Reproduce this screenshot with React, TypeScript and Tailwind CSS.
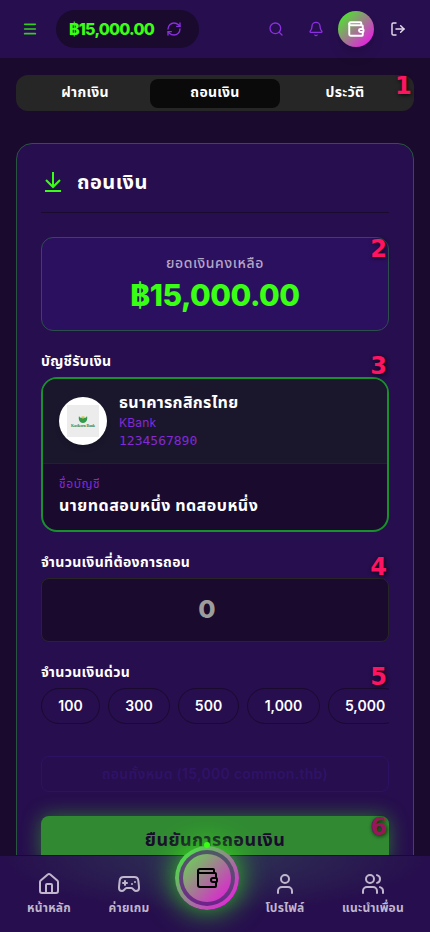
import { LogOut, Search, Bell, Menu, RefreshCw, House, Gamepad2, User, Users } from "lucide-react";

const quickAmounts = [
  { label: "100", width: "w-[59px]" },
  { label: "300", width: "w-[62px]" },
  { label: "500", width: "w-[61px]" },
  { label: "1,000", width: "w-[73px]" },
  { label: "5,000", width: "w-[74px]" },
];

function WalletIcon({ className }: { className: string }) {
  return (
    <svg className={className} viewBox="0 0 24 24" fill="none" stroke="currentColor" strokeLinecap="round" strokeLinejoin="round">
      <path d="M19 7V4a1 1 0 0 0-1-1H5a2 2 0 0 0 0 4h15a1 1 0 0 1 1 1v4h-3a2 2 0 0 0 0 4h3a1 1 0 0 0 1-1v-2a1 1 0 0 0-1-1" />
      <path d="M3 5v14a2 2 0 0 0 2 2h15a1 1 0 0 0 1-1v-4" />
    </svg>
  );
}

function Marker({ n, className }: { n: number; className: string }) {
  return (
    <span
      className={`absolute z-10 font-['DejaVu_Sans'] text-[24px] leading-none font-bold [text-shadow:1px_1px_4px_rgba(0,0,0,0.8)] ${className}`}
    >
      {n}
    </span>
  );
}

function Header() {
  return (
    <header className="flex h-[58px] items-center bg-[#270e4e] pl-[22px] pr-[22px]">
      <Menu className="size-4 text-[#39ff14] opacity-80" strokeWidth={2.5} />
      <div className="ml-[18px] flex h-[38px] w-[143px] items-center rounded-full bg-[#1a0a2e] pl-[13px]">
        <span className="w-[86px] text-[16px] font-extrabold tracking-[-0.8px] whitespace-nowrap text-[#39ff14]">฿15,000.00</span>
        <RefreshCw className="ml-[11px] size-4 text-[#8b2fe0]" strokeWidth={2} />
      </div>
      <Search className="ml-[69px] size-4 shrink-0 text-[#8b2fe0]" strokeWidth={2} />
      <Bell className="ml-6 size-4 shrink-0 text-[#8b2fe0]" strokeWidth={2} />
      <div className="ml-[14px] flex size-9 shrink-0 items-center justify-center rounded-full bg-linear-to-br/srgb from-[#39ff14] to-[#ff00ff] text-white shadow-lg">
        <WalletIcon className="size-[18px] stroke-[2.6]" />
      </div>
      <LogOut className="ml-4 size-4 shrink-0 text-[#e4dcec]" strokeWidth={2.2} />
    </header>
  );
}

function Tabs() {
  return (
    <div className="relative mx-4 mt-[17px] grid h-9 grid-cols-[130px_130px_130px] items-center rounded-xl bg-[#262626] px-1 text-center text-[14px] font-bold tracking-[0.3px] text-white">
      <span className="-mt-[3px] leading-[29px]">ฝากเงิน</span>
      <span className="h-[29px] rounded-lg bg-[#0a0a0a] leading-[26px]">ถอนเงิน</span>
      <span className="-mt-[3px] leading-[29px]">ประวัติ</span>
      <Marker n={1} className="top-[-1px] right-[2px] text-[#ff1462]" />
    </div>
  );
}

function AccountCard() {
  return (
    <div className="h-[155px] overflow-hidden rounded-2xl border-2 border-[#18912c] bg-[#1a0a2e]">
      <div className="flex h-[85px] items-center border-b border-[#21202e] bg-[#1a172c] pl-4">
        <div className="flex size-12 items-center justify-center rounded-full bg-white shadow-md">
          <svg className="size-8" viewBox="0 0 32 32">
            <rect width="32" height="32" fill="#ececec" />
            <path d="M12 11c1 2 2 2 4 2s3 0 4-2c1 4-1 7-4 7s-5-3-4-7z" fill="#2f9b4b" />
            <path d="M14 12c1-1 3-1 4 0-1 2-3 2-4 0z" fill="#d9c34a" />
            <text x="16" y="22.300" textAnchor="middle" fontSize="4" fontWeight="700" fontFamily="Liberation Serif, serif" fill="#2d8a58" textLength="24">
              Kasikorn Bank
            </text>
          </svg>
        </div>
        <div className="ml-3 -mt-px flex flex-col">
          <span className="text-[16px] leading-6 font-bold tracking-[0.3px] text-white">ธนาคารกสิกรไทย</span>
          <span className="mt-px text-[12px] leading-4 tracking-[0.2px] text-[#8429d6]">KBank</span>
          <span className="font-['DejaVu_Sans_Mono'] text-[13px] leading-5 text-[#8429d6]">1234567890</span>
        </div>
      </div>
      <div className="flex flex-col pt-3 pl-4">
        <span className="text-[12px] leading-4 tracking-[0.6px] text-[#8429d6]">ชื่อบัญชี</span>
        <span className="mt-px text-[16px] leading-6 font-bold tracking-[0.5px] text-white">นายทดสอบหนึ่ง ทดสอบหนึ่ง</span>
      </div>
    </div>
  );
}

function BottomNav() {
  return (
    <nav className="absolute bottom-0 left-0 flex h-[77px] w-full border-t border-[#1a0a2e] bg-[#270e4e] bg-[radial-gradient(ellipse_50%_75%_at_top,#2e3454,#270e4e)] text-[12px] font-bold tracking-[0.2px] text-[#c0b6cd]">
      <div className="ml-[14px] flex w-[70px] flex-col items-center pt-4">
        <House className="size-6" strokeWidth={2} />
        <span className="mt-1 leading-4">หน้าหลัก</span>
      </div>
      <div className="ml-[10px] flex w-[70px] flex-col items-center pt-4">
        <Gamepad2 className="size-6" strokeWidth={2} />
        <span className="mt-1 leading-4">ค่ายเกม</span>
      </div>
      <div className="relative mt-[-10px] ml-[11px] flex size-16 items-center justify-center rounded-full bg-linear-to-br/srgb from-[#4fd94a] from-15% to-[#d930d0] to-85% shadow-[0_0_30px_rgba(57,255,20,0.8)]">
        <div className="flex size-14 items-center justify-center rounded-full bg-linear-to-b from-[#4c5a62] to-[#6f1f8c]">
          <div className="flex size-12 items-center justify-center rounded-full bg-linear-to-br/srgb from-[#5fe04a] to-[#ea12df] text-black">
            <WalletIcon className="size-6 stroke-2" />
          </div>
        </div>
        <span className="absolute top-[-4px] left-[29px] size-1.5 rounded-full bg-[#39ff14]" />
      </div>
      <div className="ml-[11px] flex w-[70px] flex-col items-center pt-4">
        <User className="size-6" strokeWidth={2} />
        <span className="mt-1 leading-4">โปรไฟล์</span>
      </div>
      <div className="ml-[13px] flex w-[80px] flex-col items-center pt-4">
        <Users className="size-6" strokeWidth={2} />
        <span className="mt-1 leading-4 whitespace-nowrap">แนะนำเพื่อน</span>
      </div>
    </nav>
  );
}

export default function App() {
  return (
    <div className="relative h-[932px] w-[430px] overflow-hidden bg-[#1a0a2e] font-[Inter,'Noto_Sans_Thai',sans-serif]">
      <Header />
      <Tabs />
      <main className="mx-4 mt-8 flex h-[900px] flex-col rounded-2xl border border-[#2a5640] bg-[#270e4e] px-6">
        <div className="flex h-[69px] shrink-0 items-center border-b border-[#1a0a2e] pt-2">
          <svg className="size-6 text-[#39ff14]" viewBox="0 0 24 24" fill="none" stroke="currentColor" strokeWidth="2">
            <path d="M12 2v15M5 10l7 7 7-7M4 21h16" />
          </svg>
          <h1 className="ml-3 text-[20px] font-bold tracking-[0.5px] text-white">ถอนเงิน</h1>
        </div>

        <section className="relative mt-6 flex h-[94px] shrink-0 flex-col items-center rounded-xl border border-[#2c4f4c] bg-[#2c1060] pt-4">
          <span className="-mt-px text-[14px] leading-5 font-medium tracking-[0.6px] text-[#b3a6c6]">ยอดเงินคงเหลือ</span>
          <span className="mt-1 text-[30px] leading-9 font-extrabold tracking-[-0.5px] text-[#39ff14]">฿15,000.00</span>
          <Marker n={2} className="top-[-1px] right-[1px] text-[#ff1462]" />
        </section>

        <section className="relative mt-5">
          <h2 className="h-[26px] text-[14px] leading-5 font-bold tracking-[0.3px] text-white">บัญชีรับเงิน</h2>
          <AccountCard />
          <Marker n={3} className="top-[3px] right-[2px] text-[#ff1462]" />
        </section>

        <section className="relative mt-5">
          <h2 className="h-[26px] text-[14px] leading-5 font-bold tracking-[0.35px] text-white">จำนวนเงินที่ต้องการถอน</h2>
          <div className="flex h-16 items-center justify-center rounded-lg border border-[#262626] bg-[#1a0a2e] pr-4 text-[25px] font-extrabold text-[#9d9d9d]">
            0
          </div>
          <Marker n={4} className="top-[3px] right-[2px] text-[#ff1462]" />
        </section>

        <section className="relative mt-5">
          <h2 className="h-[26px] text-[14px] leading-5 font-bold tracking-[0.35px] text-white">จำนวนเงินด่วน</h2>
          <div className="flex gap-2 overflow-hidden">
            {quickAmounts.map((amount) => (
              <span
                key={amount.label}
                className={`flex h-9 shrink-0 items-center justify-center rounded-full border border-[#1a0a2e] pb-0.5 text-[14px] font-semibold text-white ${amount.width}`}
              >
                {amount.label}
              </span>
            ))}
          </div>
          <Marker n={5} className="top-[3px] right-[2px] text-[#ff1462]" />
        </section>

        <button className="mt-8 h-9 shrink-0 rounded-lg border border-[#2d1164] pb-0.5 text-[14px] font-semibold tracking-[0.3px] text-[#2f1268]">
          ถอนทั้งหมด (15,000 common.thb)
        </button>

        <div className="relative mt-6 h-12 shrink-0 rounded-lg bg-[#318a32] text-center text-[18px] leading-[48px] font-bold tracking-[0.4px] text-[#1a0a2e] shadow-[0_0_20px_rgba(57,255,20,0.4)]">
          ยืนยันการถอนเงิน
          <Marker n={6} className="top-[-1px] right-[2px] tracking-normal text-[#98165a]" />
        </div>
      </main>
      <BottomNav />
    </div>
  );
}
